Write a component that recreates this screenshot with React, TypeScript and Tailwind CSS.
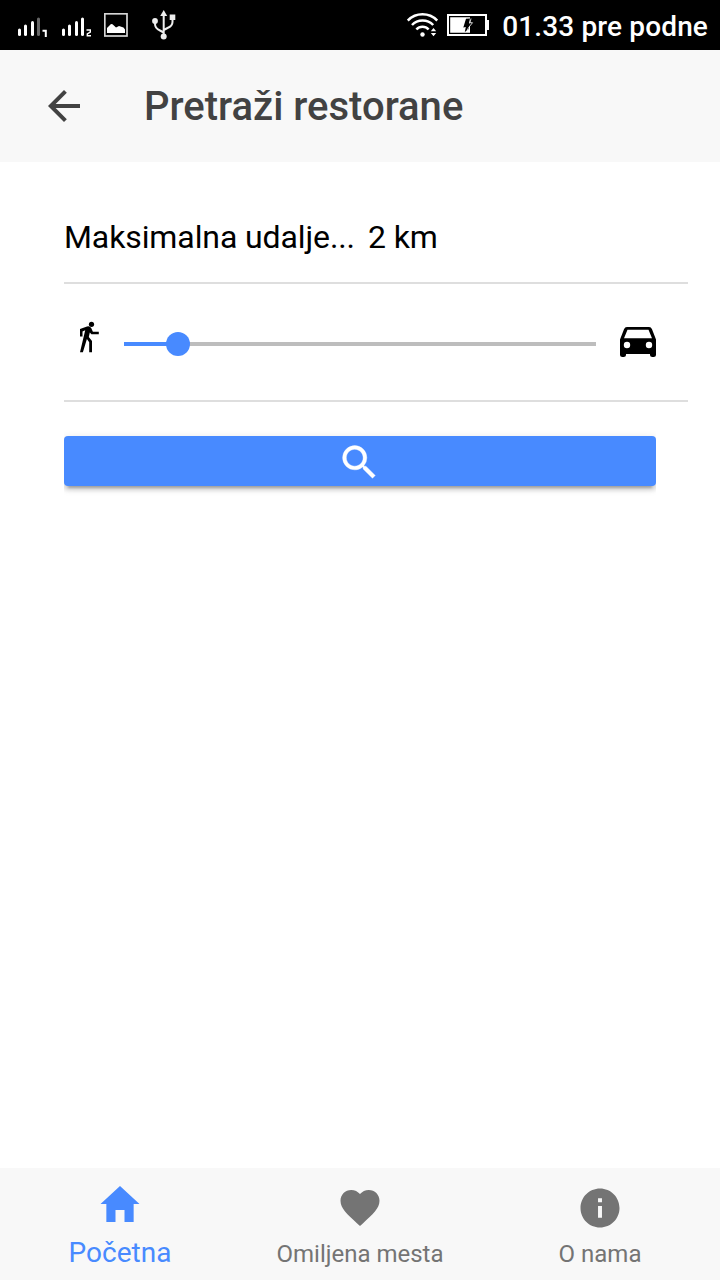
import { useState } from "react";

function Signal({ bars, sim }: { bars: number; sim: number }) {
  return (
    <div className="flex h-[25px] w-[32px] items-end">
      <svg width="24" height="21" viewBox="0 0 24 21" strokeWidth="3" strokeLinecap="round" className="shrink-0">
        <path d="M2.500 13v4.500" stroke="#fff" />
        <path d="M8.500 9v8.500" stroke="#fff" />
        <path d="M15.500 5.500v12" stroke="#fff" />
        <path d="M21.500 2v15.500" stroke={bars > 3 ? "#fff" : "#666"} />
      </svg>
      <svg width="6" height="8" viewBox="0 0 6 8" fill="none" stroke="#fff" strokeWidth="1.400" className="mb-[1px] ml-[1px]">
        {sim === 1 ? <path d="M.5 1.800h3.300V8" strokeWidth="2" /> : <path d="M.5 1h3.800v2.200L1.300 5v1.700h3.700" />}
      </svg>
    </div>
  );
}

function StatusBar() {
  return (
    <div className="flex h-[50px] shrink-0 items-center bg-black pl-[17px] pr-3 text-white">
      <Signal bars={3} sim={1} />
      <div className="ml-[12px]"><Signal bars={4} sim={2} /></div>
      <svg width="24" height="24" viewBox="0 0 24 24" className="ml-[11px]">
        <rect x=".8" y=".8" width="22.200" height="22.200" fill="none" stroke="#d6d6d6" strokeWidth="1.700" />
        <path d="M3 20v-5l4-4 1.500.2 3.500 3.300 3-1.500 4.500 1.500 1.500 2V20z" fill="#fff" />
      </svg>
      <svg width="24" height="30" viewBox="0 0 24 30" className="ml-6" fill="none" stroke="#eee" strokeWidth="2">
        <path d="M11.700 5v20M3 12v2c0 3.500 2.500 5.500 5 6.500l3.700 2M20.500 8v4c0 3.500-2.500 5-5 6l-3.800 2" />
        <path d="M11.700 0 15.200 6H8.200z" fill="#eee" stroke="none" />
        <circle cx="3" cy="11" r="2.900" fill="#eee" stroke="none" />
        <path d="M17.700 4.500h5.600v5.500h-5.600z" fill="#eee" stroke="none" />
        <circle cx="11.700" cy="26.500" r="3" fill="#eee" stroke="none" />
      </svg>
      <div className="flex-1" />
      <svg width="31" height="26" viewBox="0 0 31 26" fill="none" stroke="#fff" strokeWidth="2.500">
        <path d="M.8 8.500C9 .3 22 .3 30.200 8.500M5 13c5.600-6 15.500-6 21.200 0M9.400 17.500c3.200-3.600 9-3.600 12.200 0" />
        <circle cx="15.500" cy="22.500" r="2.200" fill="#fff" stroke="none" />
        <path d="m26.500 16 2.700 3.200h-5.400zM26.500 24.200l2.700-3.300h-5.400z" fill="#fff" stroke="none" />
      </svg>
      <svg width="42" height="24" viewBox="0 0 42 24" className="ml-[9px]">
        <path d="M1 2h38v20H1z" fill="none" stroke="#fff" strokeWidth="2" />
        <path d="M3.200 4.200H23v15.600H3.200zM40 7h2v10h-2z" fill="#fff" />
        <path d="m19 5.700 4-.2-1 5 3.500-.5-3.500 4-.2 2-4 3 1-5-2.500.5z" fill="#000" />
        <path d="m24 5.500-1 4.200h2.500l-4 5-1.500 3" fill="none" stroke="#fff" strokeWidth=".8" />
      </svg>
      <span className="ml-[13px] mt-[3px] text-[28px] font-medium leading-8 tracking-[0.14px]">01.33 pre podne</span>
    </div>
  );
}

const tabs = [
  { label: "Početna", path: "M208 448V320h96v128h97.600V256H464L256 64 48 256h62.400v192z" },
  {
    label: "Omiljena mesta",
    path: "M256 448l-30.164-27.211C118.718 322.442 48 258.610 48 179.095 48 114.221 97.918 64 162.400 64c36.399 0 70.717 16.742 93.600 43.947C278.882 80.742 313.199 64 349.600 64 414.082 64 464 114.221 464 179.095c0 79.516-70.719 143.348-177.836 241.694L256 448z",
  },
  {
    label: "O nama",
    path: "M256 48C141.200 48 48 141.200 48 256s93.200 208 208 208 208-93.200 208-208S370.800 48 256 48zm21 312h-42V235h42v125zm0-166h-42v-42h42v42z",
  },
];

export default function App() {
  const [active, setActive] = useState(0);
  const [distance, setDistance] = useState(2);
  const percent = 11.44 + (distance - 2) * 11.07;

  return (
    <div className="flex h-[1280px] w-[720px] flex-col overflow-hidden bg-white font-[Roboto,sans-serif]">
      <StatusBar />
      <header className="flex h-28 shrink-0 items-center bg-[#f8f8f8] pl-10 text-[#424242]">
        <button aria-label="Nazad">
          <svg width="48" height="48" viewBox="0 0 24 24" fill="currentColor">
            <path d="M20 11H7.830l5.590-5.590L12 4l-8 8 8 8 1.410-1.410L7.830 13H20v-2z" />
          </svg>
        </button>
        <h1 className="ml-14 mt-[2px] text-[40px] font-medium leading-[48px]">Pretraži restorane</h1>
      </header>

      <main className="flex flex-1 flex-col pl-16 pt-8">
        <div className="mr-8 flex h-[90px] items-center border-b-2 border-[#dedede] pb-[2px] text-[32px] leading-10 tracking-[-0.1px] text-black">
          <span className="w-[304px] whitespace-nowrap">Maksimalna udalje...</span>
          <span>2 km</span>
        </div>
        <div className="mr-8 flex h-[118px] items-center border-b-2 border-[#dedede] pl-4">
          <svg width="19" height="32" viewBox="0 0 19 32" className="mb-[11px]">
            <circle cx="11.500" cy="3.300" r="2.600" />
            <path d="M0 7.900 7 5.500q2.800-.7 4.200 1.500l1.700 3.700h5.900V13.200h-7.400l-1.600-1.800-1 4.500 3.200 4V31.300H9.200V21.200L6.900 17.900 2.900 31.300H0L5.200 9.300 2.500 10.400V15.500H0z" />
          </svg>
          <div
            className="relative ml-[25px] flex h-10 w-[472px] cursor-pointer items-center"
            onClick={(event) => {
              const box = event.currentTarget.getBoundingClientRect();
              setDistance(1 + Math.round(((event.clientX - box.left) / box.width) * 9));
            }}
          >
            <div className="mt-[3px] h-1 w-full bg-[#bdbdbd]">
              <div className="h-full bg-[#488aff]" style={{ width: `${percent}%` }} />
            </div>
            <div className="absolute top-[9.500px] size-6 -translate-x-1/2 rounded-full bg-[#488aff]" style={{ left: `${percent}%` }} />
          </div>
          <svg width="36" height="30" viewBox="0 0 36 30" className="ml-6">
            <path
              fillRule="evenodd"
              d="M7 0h22q2.200 0 3 2.200L36 12.500V27.500q0 2.500-2.500 2.500h-1Q30 30 30 27.500V27H6v.5Q6 30 3.500 30h-1Q0 30 0 27.500V12.500L4 2.200Q4.800 0 7 0zm.5 2.800L4 11.200h28l-3.500-8.400zM7 14.800a3.200 3.200 0 1 0 0 6.400 3.200 3.200 0 0 0 0-6.400m22 0a3.200 3.200 0 1 0 0 6.400 3.200 3.200 0 0 0 0-6.400"
            />
          </svg>
        </div>
        <button aria-label="Pretraži" className="mr-16 mt-[34px] flex h-[50px] items-center justify-center rounded-[4px] bg-[#488aff] text-white shadow-[0_4px_4px_0_rgba(0,0,0,0.14),0_6px_2px_-4px_rgba(0,0,0,0.20),0_2px_10px_0_rgba(0,0,0,0.12)] [clip-path:inset(-12px_0_-20px_0)]">
          <svg width="44.800" height="44.800" viewBox="0 0 24 24" fill="currentColor" stroke="currentColor" strokeWidth=".2" className="mr-[1px] mt-[2px]">
            <path d="M15.500 14h-.79l-.28-.27A6.471 6.471 0 0 0 16 9.500 6.500 6.500 0 1 0 9.500 16c1.610 0 3.090-.59 4.230-1.570l.27.28v.79l5 4.990L20.490 19l-4.990-5zm-6 0C7.010 14 5 11.990 5 9.500S7.010 5 9.500 5 14 7.010 14 9.500 11.990 14 9.500 14z" />
          </svg>
        </button>
      </main>

      <nav className="grid h-28 shrink-0 grid-cols-3 bg-[#f8f8f8]">
        {tabs.map((tab, index) => (
          <button
            key={tab.label}
            onClick={() => setActive(index)}
            className={`flex flex-col items-center ${index === active ? "pt-3 text-[28px] text-[#488aff]" : "pt-4 text-[24px] text-[#747474]"}`}
          >
            <svg width="48" height="48" viewBox="0 0 512 512" fill="currentColor">
              <path d={tab.path} />
            </svg>
            <span className={index === active ? "mt-[9px] leading-8" : "mt-2 leading-7"}>{tab.label}</span>
          </button>
        ))}
      </nav>
    </div>
  );
}
